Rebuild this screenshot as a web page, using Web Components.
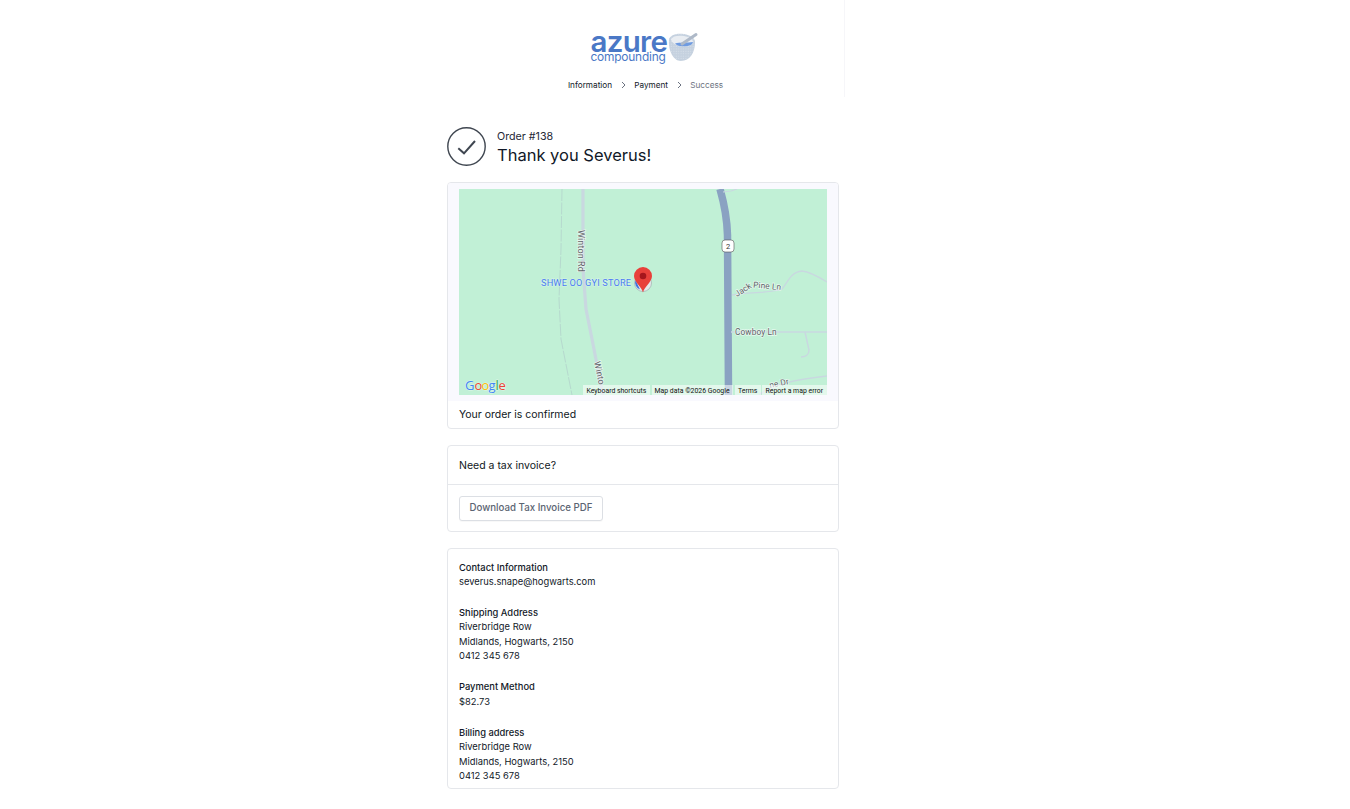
<!DOCTYPE html>
<html lang="en">
<head>
<meta charset="UTF-8">
<title>Order confirmed</title>
<style>
  html, body { margin: 0; background: #fff; }
  body { font-family: Inter, "Liberation Sans", sans-serif; color: #111; }
</style>

<template id="checkout-page-template">
  <style>
    :host { display: block; width: 400px; margin-left: 445px; }
    main { display: flex; flex-direction: column; gap: 16px; padding: 0 6px 0 2px; }
  </style>
  <slot name="header"></slot>
  <main><slot></slot></main>
</template>

<template id="checkout-header-template">
  <style>
    :host { display: block; height: 97px; border-right: 1px solid #f6f6f9; box-sizing: border-box; }
    .logo { display: flex; justify-content: center; padding-top: 31px; height: 47px; margin-left: -1px; }
    .words { display: flex; flex-direction: column; color: #4a78c6; width: 76px; }
    .azure { font-size: 29.5px; font-weight: 600; line-height: 21px; height: 20px; letter-spacing: -.7px; white-space: nowrap; }
    .comp { font-size: 11.9px; line-height: 12px; font-weight: 400; letter-spacing: -.2px; white-space: nowrap; }
    .mortar { margin-left: 1px; margin-right: -1px; }
    nav { display: flex; justify-content: center; align-items: center; gap: 7.600px; font-size: 8.2px; line-height: 12px; margin-top: 1px; padding-left: 2px; color: #111827; }
    .off { color: #6b7280; }
  </style>
  <div class="logo">
    <div class="words"><span class="azure">azure</span><span class="comp">compounding</span></div>
    <svg class="mortar" width="31" height="33" viewBox="0 0 31 33">
      <defs>
        <pattern id="speck" width="2.400" height="2.400" patternUnits="userSpaceOnUse">
          <circle cx="1" cy="1" r=".4" fill="#e6ebf2"/>
        </pattern>
      </defs>
      <path d="M1 8 C3 3 10 2 16 3 C22 4 28 7 27 12 C27 21 22 30 13 30 C5 30 0 19 1 8 Z" fill="#c5d1df"/>
      <path d="M1 8 C3 3 10 2 16 3 C22 4 28 7 27 12 C27 21 22 30 13 30 C5 30 0 19 1 8 Z" fill="url(#speck)"/>
      <path d="M3 8 C5 5 10 4 16 5 C21 6 25 8 25 11 C24 15 18 16 12 15 C7 14 3 11 3 8 Z" fill="#e9edf2"/>
      <path d="M7 12.500 C12 11 19 12 25 11 C24 15 18 16 12 15 C10 14.800 8.500 13.800 7 12.500 Z" fill="#6f9be0"/>
      <path d="M14 13 L28 3.500" stroke="#aeb9c8" stroke-width="3" stroke-linecap="round"/>
    </svg>
  </div>
  <nav>
    <span>Information</span>
    <svg width="7" height="8" viewBox="0 0 7 8"><path d="M2 1 L5 4 L2 7" fill="none" stroke="#6b7280"/></svg>
    <span>Payment</span>
    <svg width="7" height="8" viewBox="0 0 7 8"><path d="M2 1 L5 4 L2 7" fill="none" stroke="#6b7280"/></svg>
    <span class="off">Success</span>
  </nav>
</template>

<template id="order-status-template">
  <style>
    :host { display: flex; align-items: center; gap: 11px; height: 39px; margin-top: 30px; }
    .text { padding-top: 1px; }
    .num { font-size: 10.7px; line-height: 14px; color: #1f2937; padding-top: 3px; }
    .thanks { font-size: 16.5px; line-height: 23px; color: #111827; }
  </style>
  <svg width="39" height="39" viewBox="0 0 39 39" fill="none">
    <circle cx="19.500" cy="19.500" r="18.700" stroke="#3f4650" stroke-width="1.400"/>
    <path d="M11.300 21.300 L17 26.300 L28 14" stroke="#3f4650" stroke-width="2"/>
  </svg>
  <div class="text">
    <div class="num"><slot name="order"></slot></div>
    <div class="thanks"><slot></slot></div>
  </div>
</template>

<template id="order-map-template">
  <style>
    :host { display: block; height: 247px; box-sizing: border-box; border: 1px solid #e5e7eb; border-radius: 4px; overflow: hidden; }
    .top { background: #f9f9fe; padding: 6px 11px 6px 11px; }
    svg { display: block; }
    text { font-family: Roboto, sans-serif; }
    .road { font-size: 8.300px; fill: #5f6368; stroke: #fff; stroke-opacity: .6; stroke-width: 1.500px; paint-order: stroke; letter-spacing: .1px; }
    .winton { font-size: 9px; }
    .credit { font-size: 6.900px; fill: #111; }
    .foot { font-size: 10.5px; line-height: 27px; padding-left: 11px; color: #0f1722; }
  </style>
  <div class="top">
    <svg width="368" height="206" viewBox="0 0 368 206">
      <rect width="368" height="206" fill="#c1f0d6"/>
      <path d="M103 0 L102 60 L100 110 L102 150 L113 206" fill="none" stroke="#b6d9ce" stroke-width="1" stroke-dasharray="12 1.500"/>
      <path d="M124 0 L124 80 L127 120 L133 150 L144 206" fill="none" stroke="#c9d8e0" stroke-width="3.200"/>
      <path d="M261 0 C265 14 268 28 268.500 46 L269.500 206" fill="none" stroke="#8aa2c2" stroke-width="7.500"/>
      <path d="M264 3 L272 2 L278 0" fill="none" stroke="#c9d8e0" stroke-width="1.200"/>
      <path d="M273 106 C290 103 315 104 323 100 C328 95 331 83 343 82 C352 83 360 88 368 93" fill="none" stroke="#c9d8e0" stroke-width="1.300"/>
      <path d="M272 143 L368 143" fill="none" stroke="#c9d8e0" stroke-width="1.500"/>
      <path d="M346 143 L350 161 C350 166 346 168 342 168" fill="none" stroke="#c9d8e0" stroke-width="1.500"/>
      <path d="M300 206 C312 195 340 190 368 187" fill="none" stroke="#c9d8e0" stroke-width="1.500"/>

      <text class="road winton" transform="translate(119 41) rotate(90)">Winton Rd</text>
      <text class="road winton" transform="translate(135 173) rotate(78)">Winto</text>
      <text class="road" transform="translate(278 108) rotate(-33)">Jack</text>
      <text class="road" transform="translate(294 98.500) rotate(5)">Pine Ln</text>
      <text class="road" x="276" y="146">Cowboy Ln</text>
      <text class="road" transform="translate(311 199) rotate(-12)">ne Dr</text>

      <rect x="263" y="51" width="12" height="12" rx="3" fill="#fff" stroke="#555" stroke-width=".6"/>
      <text x="269" y="60" text-anchor="middle" font-size="7.500" fill="#333">2</text>

      <text x="82" y="97" font-size="9.200" fill="#4a7cf2" letter-spacing=".18" stroke="#fff" stroke-opacity=".35" stroke-width="1.200" paint-order="stroke">SHWE OO GYI STORE</text>
      <circle cx="184" cy="94" r="8.500" fill="#e4e9ea" stroke="#98a3a8" stroke-width=".6"/>
      <path d="M176.500 91 A7.600 7.600 0 0 0 181 100.500 Z" fill="#3f74dd"/>
      <path d="M184 103.500 C183 98 175 93 175 87 A9 9 0 0 1 193 87 C193 93 185 98 184 103.500 Z" fill="#e8403a"/>
      <circle cx="184" cy="87" r="3.300" fill="#a5161c"/>

      <rect x="124" y="196" width="67" height="10" fill="#fff" fill-opacity=".55"/>
      <rect x="193" y="196" width="81" height="10" fill="#fff" fill-opacity=".55"/>
      <rect x="276" y="196" width="26" height="10" fill="#fff" fill-opacity=".55"/>
      <rect x="303" y="196" width="65" height="10" fill="#fff" fill-opacity=".55"/>
      <text class="credit" x="127.500" y="204">Keyboard shortcuts</text>
      <text class="credit" x="195.500" y="204">Map data ©2026 Google</text>
      <text class="credit" x="279" y="204">Terms</text>
      <text class="credit" x="306.500" y="204">Report a map error</text>

      <g font-size="13" font-weight="400" stroke="#fff" stroke-opacity=".5" stroke-width="1" paint-order="stroke" style="font-family:'Open Sans',sans-serif">
        <text x="6" y="201" fill="#4285f4" style="font-family:inherit">G</text>
        <text x="15.500" y="201" fill="#ea4335" style="font-family:inherit">o</text>
        <text x="22.500" y="201" fill="#fbbc05" style="font-family:inherit">o</text>
        <text x="29.500" y="201" fill="#4285f4" style="font-family:inherit">g</text>
        <text x="36.500" y="201" fill="#34a853" style="font-family:inherit">l</text>
        <text x="39.500" y="201" fill="#ea4335" style="font-family:inherit">e</text>
      </g>
    </svg>
  </div>
  <div class="foot"><slot></slot></div>
</template>

<template id="tax-card-template">
  <style>
    :host { display: block; border: 1px solid #e5e7eb; border-radius: 4px; box-sizing: border-box; height: 87px; }
    .head { font-size: 10.5px; line-height: 38px; padding: 1px 11px 0; height: 37px; border-bottom: 1px solid #e5e7eb; color: #0f1722; }
    .body { padding: 11px; }
  </style>
  <div class="head"><slot name="title"></slot></div>
  <div class="body"><slot></slot></div>
</template>

<template id="ghost-button-template">
  <style>
    :host { display: block; width: 144px; }
    button { display: block; font: 500 9.7px/20px Inter, sans-serif; color: #5b6472; background: #fff; border: 1px solid #dcdfe4; border-radius: 3px; height: 25px; width: 144px; padding: 0 0 2px; box-shadow: 0 1px 1px rgba(0,0,0,.03); }
  </style>
  <button><slot></slot></button>
</template>

<template id="info-card-template">
  <style>
    :host { display: block; border: 1px solid #e5e7eb; border-radius: 4px; padding: 11.5px 11px; box-sizing: border-box; height: 241px; }
    .stack { display: flex; flex-direction: column; gap: 16.4px; }
  </style>
  <div class="stack"><slot></slot></div>
</template>

<template id="info-block-template">
  <style>
    :host { display: block; font-size: 9.35px; line-height: 14.5px; color: #111827; }
    h3 { font: inherit; font-weight: 500; margin: 0; }
  </style>
  <h3><slot name="label"></slot></h3>
  <slot></slot>
</template>
</head>

<body>
  <checkout-page>
    <checkout-header slot="header"></checkout-header>
    <order-status><span slot="order">Order #138</span>Thank you Severus!</order-status>
    <order-map>Your order is confirmed</order-map>
    <tax-card>
      <span slot="title">Need a tax invoice?</span>
      <ghost-button>Download Tax Invoice PDF</ghost-button>
    </tax-card>
    <info-card>
      <info-block><span slot="label">Contact Information</span>severus.snape@hogwarts.com</info-block>
      <info-block><span slot="label">Shipping Address</span>Riverbridge Row<br>Midlands, Hogwarts, 2150<br>0412 345 678</info-block>
      <info-block><span slot="label">Payment Method</span>$82.73</info-block>
      <info-block><span slot="label">Billing address</span>Riverbridge Row<br>Midlands, Hogwarts, 2150<br>0412 345 678</info-block>
    </info-card>
  </checkout-page>

<script>
  // every element is the same: clone its template into an open shadow root
  for (const name of ["checkout-page", "checkout-header", "order-status", "order-map", "tax-card", "ghost-button", "info-card", "info-block"]) {
    customElements.define(name, class extends HTMLElement {
      constructor() {
        super();
        let template = document.getElementById(name + "-template");
        this.attachShadow({ mode: "open" }).appendChild(template.content.cloneNode(true));
      }
    });
  }
</script>
</body>
</html>
